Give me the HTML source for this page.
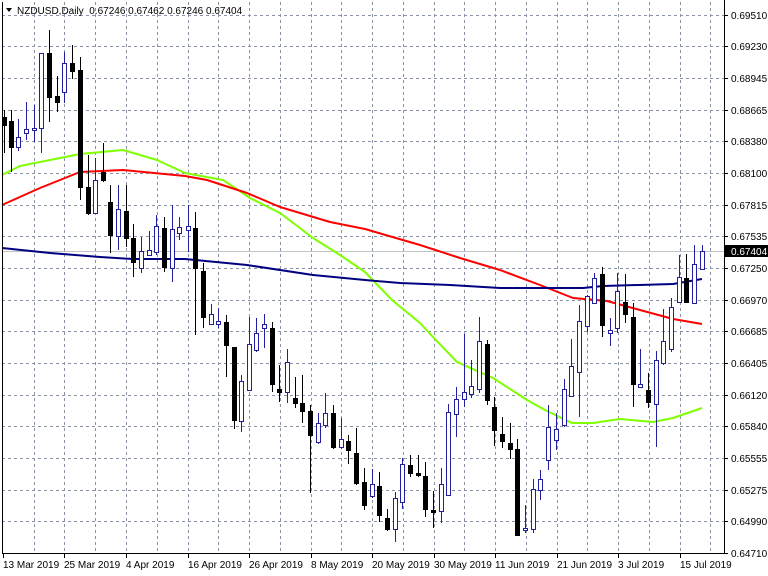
<!DOCTYPE html>
<html><head><meta charset="utf-8"><style>
html,body{margin:0;padding:0;background:#fff;}
svg{display:block;}
text{font-family:"Liberation Sans",sans-serif;font-size:10px;fill:#000;}
</style></head><body>
<svg width="768" height="576" viewBox="0 0 768 576" xmlns="http://www.w3.org/2000/svg">
<rect width="768" height="576" fill="#fff"/>
<g stroke="#8a93a6" stroke-width="1" stroke-dasharray="3,3" fill="none" shape-rendering="crispEdges">
<path d="M2 15.5H724M2 46.5H724M2 78.5H724M2 110.5H724M2 141.5H724M2 173.5H724M2 205.5H724M2 236.5H724M2 268.5H724M2 300.5H724M2 331.5H724M2 363.5H724M2 395.5H724M2 426.5H724M2 458.5H724M2 490.5H724M2 521.5H724"/>
<path d="M34.5 2V553M64.5 2V553M95.5 2V553M126.5 2V553M157.5 2V553M188.5 2V553M218.5 2V553M249.5 2V553M280.5 2V553M311.5 2V553M341.5 2V553M372.5 2V553M403.5 2V553M434.5 2V553M464.5 2V553M495.5 2V553M526.5 2V553M557.5 2V553M587.5 2V553M618.5 2V553M649.5 2V553M680.5 2V553M710.5 2V553"/>
</g>
<path d="M2 251.5H724" stroke="#c0c4c8" stroke-width="1" shape-rendering="crispEdges"/>
<g fill="none" stroke-width="2" stroke-linejoin="round">
<polyline stroke="#7fff00" points="2,175 20,166 50,160 80,154 123,150 157,160 185,173 223,180 250,198 280,213 313,238 340,255 365,272 392,300 420,323 433,337 457,362 493,378 527,400 545,410 572,423 593,423 620,419 653,422 673,418 702,408"/>
<polyline stroke="#ff0000" points="2,205 40,188 80,172 123,170 185,176 207,180 247,193 280,207 330,222 365,229 420,245 460,258 500,270 540,285 573,298 607,301 640,310 673,319 702,324"/>
<polyline stroke="#000080" points="2,248 50,253 100,257 133,259 185,259 247,265 313,275 365,280 400,283 450,285 500,288 540,288 583,288 603,286 673,284 702,279"/>
</g>
<g fill="#000" stroke="#000" stroke-width="1" shape-rendering="crispEdges">
<path d="M4.5 110V153M11.5 110V172M49.5 30V122M57.5 76V112M72.5 45V79M80.5 57V200M88.5 155V215M103.5 143V182M110.5 185V253M126.5 185V247M133.5 224V277M164.5 217V272M195.5 212V335M203.5 263V328M226.5 315V377M234.5 347V429M272.5 322V392M279.5 365V402M295.5 377V408M302.5 375V423M310.5 405V493M333.5 405V449M348.5 435V464M356.5 428V485M364.5 468V510M379.5 472V522M387.5 509V531M410.5 455V477M418.5 455V477M425.5 462V517M433.5 491V528M487.5 340V405M494.5 397V446M502.5 417V448M510.5 423V459M517.5 439V535M602.5 267V337M625.5 274V323M633.5 303V407M648.5 373V408M686.5 254V302"/>
<rect x="2.5" y="117.5" width="4" height="8"/><rect x="9.5" y="121.5" width="4" height="26"/><rect x="47.5" y="53.5" width="4" height="44"/><rect x="55.5" y="96.5" width="4" height="6"/><rect x="70.5" y="63.5" width="4" height="8"/><rect x="78.5" y="70.5" width="4" height="117"/><rect x="86.5" y="187.5" width="4" height="26"/><rect x="101.5" y="172.5" width="4" height="8"/><rect x="108.5" y="202.5" width="4" height="33"/><rect x="124.5" y="211.5" width="4" height="27"/><rect x="131.5" y="238.5" width="4" height="24"/><rect x="162.5" y="228.5" width="4" height="39"/><rect x="193.5" y="228.5" width="4" height="40"/><rect x="201.5" y="271.5" width="4" height="46"/><rect x="224.5" y="322.5" width="4" height="23"/><rect x="232.5" y="347.5" width="4" height="73"/><rect x="270.5" y="328.5" width="4" height="56"/><rect x="277.5" y="389.5" width="4" height="3"/><rect x="293.5" y="398.5" width="4" height="5"/><rect x="300.5" y="403.5" width="4" height="8"/><rect x="308.5" y="411.5" width="4" height="24"/><rect x="331.5" y="413.5" width="4" height="34"/><rect x="346.5" y="441.5" width="4" height="9"/><rect x="354.5" y="453.5" width="4" height="30"/><rect x="362.5" y="482.5" width="4" height="23"/><rect x="377.5" y="486.5" width="4" height="29"/><rect x="385.5" y="518.5" width="4" height="11"/><rect x="408.5" y="465.5" width="4" height="8"/><rect x="416.5" y="473.5" width="4" height="2"/><rect x="423.5" y="476.5" width="4" height="33"/><rect x="431.5" y="510.5" width="4" height="2"/><rect x="485.5" y="344.5" width="4" height="56"/><rect x="492.5" y="407.5" width="4" height="23"/><rect x="500.5" y="434.5" width="4" height="7"/><rect x="508.5" y="443.5" width="4" height="6"/><rect x="515.5" y="449.5" width="4" height="86"/><rect x="600.5" y="274.5" width="4" height="51"/><rect x="623.5" y="302.5" width="4" height="12"/><rect x="631.5" y="317.5" width="4" height="67"/><rect x="646.5" y="390.5" width="4" height="12"/><rect x="684.5" y="278.5" width="4" height="24"/>
</g>
<g fill="#fff" stroke="#1f1fa0" stroke-width="1" shape-rendering="crispEdges">
<path d="M18.5 119V151M26.5 102V140M34.5 105V142M41.5 53V153M64.5 52V103M95.5 158V213M118.5 185V250M141.5 237V273M149.5 231V255M156.5 215V255M172.5 205V282M179.5 217V240M188.5 205V252M211.5 304V324M218.5 308V328M241.5 375V432M249.5 317V390M256.5 318V352M264.5 314V348M287.5 349V403M318.5 413V444M325.5 393V428M341.5 418V449M372.5 469V498M395.5 492V542M402.5 458V509M441.5 468V523M448.5 404V495M456.5 387V437M464.5 334V407M471.5 360V398M479.5 317V393M525.5 505V533M533.5 479V533M540.5 470V500M548.5 405V470M556.5 413V450M564.5 379V427M571.5 339V397M579.5 305V417M587.5 295V332M594.5 273V303M610.5 318V346M617.5 273V333M640.5 349V387M656.5 351V447M663.5 309V365M671.5 298V352M679.5 255V303M694.5 245V303M702.5 245V269"/>
<rect x="16.5" y="137.5" width="4" height="10"/><rect x="24.5" y="129.5" width="4" height="4"/><rect x="32.5" y="128.5" width="4" height="2"/><rect x="39.5" y="53.5" width="4" height="75"/><rect x="62.5" y="63.5" width="4" height="29"/><rect x="93.5" y="180.5" width="4" height="33"/><rect x="116.5" y="209.5" width="4" height="27"/><rect x="139.5" y="251.5" width="4" height="17"/><rect x="147.5" y="250.5" width="4" height="5"/><rect x="154.5" y="226.5" width="4" height="26"/><rect x="170.5" y="229.5" width="4" height="39"/><rect x="177.5" y="227.5" width="4" height="6"/><rect x="186.5" y="226.5" width="4" height="4"/><rect x="209.5" y="314.5" width="4" height="10"/><rect x="216.5" y="321.5" width="4" height="3"/><rect x="239.5" y="381.5" width="4" height="40"/><rect x="247.5" y="344.5" width="4" height="46"/><rect x="254.5" y="333.5" width="4" height="17"/><rect x="262.5" y="324.5" width="4" height="4"/><rect x="285.5" y="362.5" width="4" height="30"/><rect x="316.5" y="423.5" width="4" height="19"/><rect x="323.5" y="413.5" width="4" height="12"/><rect x="339.5" y="439.5" width="4" height="8"/><rect x="370.5" y="484.5" width="4" height="12"/><rect x="393.5" y="498.5" width="4" height="31"/><rect x="400.5" y="464.5" width="4" height="38"/><rect x="439.5" y="484.5" width="4" height="27"/><rect x="446.5" y="412.5" width="4" height="83"/><rect x="454.5" y="399.5" width="4" height="15"/><rect x="462.5" y="392.5" width="4" height="7"/><rect x="469.5" y="386.5" width="4" height="8"/><rect x="477.5" y="341.5" width="4" height="48"/><rect x="523.5" y="528.5" width="4" height="2"/><rect x="531.5" y="489.5" width="4" height="40"/><rect x="538.5" y="479.5" width="4" height="11"/><rect x="546.5" y="427.5" width="4" height="33"/><rect x="554.5" y="429.5" width="4" height="11"/><rect x="562.5" y="389.5" width="4" height="36"/><rect x="569.5" y="366.5" width="4" height="30"/><rect x="577.5" y="321.5" width="4" height="51"/><rect x="585.5" y="296.5" width="4" height="30"/><rect x="592.5" y="278.5" width="4" height="25"/><rect x="608.5" y="330.5" width="4" height="3"/><rect x="615.5" y="291.5" width="4" height="37"/><rect x="638.5" y="384.5" width="4" height="3"/><rect x="654.5" y="360.5" width="4" height="44"/><rect x="661.5" y="341.5" width="4" height="22"/><rect x="669.5" y="307.5" width="4" height="42"/><rect x="677.5" y="277.5" width="4" height="25"/><rect x="692.5" y="264.5" width="4" height="39"/><rect x="700.5" y="251.5" width="4" height="18"/>
</g>
<g stroke="#000" stroke-width="1" fill="none" shape-rendering="crispEdges">
<path d="M2.5 2V553.5H724.5V0"/>
<path d="M724 15.5h4M724 46.5h4M724 78.5h4M724 110.5h4M724 141.5h4M724 173.5h4M724 205.5h4M724 236.5h4M724 268.5h4M724 300.5h4M724 331.5h4M724 363.5h4M724 395.5h4M724 426.5h4M724 458.5h4M724 490.5h4M724 521.5h4M724 553.5h4"/>
<path d="M3.5 553v5M64.5 553v5M126.5 553v5M188.5 553v5M249.5 553v5M311.5 553v5M372.5 553v5M434.5 553v5M495.5 553v5M557.5 553v5M618.5 553v5M680.5 553v5"/>
</g>
<g>
<text x="731" y="19">0.69510</text><text x="731" y="50">0.69230</text><text x="731" y="82">0.68945</text><text x="731" y="114">0.68665</text><text x="731" y="145">0.68380</text><text x="731" y="177">0.68100</text><text x="731" y="209">0.67815</text><text x="731" y="240">0.67535</text><text x="731" y="272">0.67250</text><text x="731" y="304">0.66970</text><text x="731" y="335">0.66685</text><text x="731" y="367">0.66405</text><text x="731" y="399">0.66120</text><text x="731" y="430">0.65840</text><text x="731" y="462">0.65555</text><text x="731" y="494">0.65275</text><text x="731" y="525">0.64990</text><text x="731" y="557">0.64710</text>
</g>
<rect x="725" y="245" width="43" height="12" fill="#000"/>
<text x="731" y="255" style="fill:#fff">0.67404</text>
<g>
<text x="3" y="568">13 Mar 2019</text><text x="64" y="568">25 Mar 2019</text><text x="126" y="568">4 Apr 2019</text><text x="188" y="568">16 Apr 2019</text><text x="249" y="568">26 Apr 2019</text><text x="311" y="568">8 May 2019</text><text x="372" y="568">20 May 2019</text><text x="434" y="568">30 May 2019</text><text x="495" y="568">11 Jun 2019</text><text x="557" y="568">21 Jun 2019</text><text x="618" y="568">3 Jul 2019</text><text x="680" y="568">15 Jul 2019</text>
</g>
<path d="M6 8h6l-3 4z" fill="#000"/>
<text x="17" y="14" style="white-space:pre" xml:space="preserve">NZDUSD,Daily  0.67246 0.67462 0.67246 0.67404</text>
</svg>
</body></html>
